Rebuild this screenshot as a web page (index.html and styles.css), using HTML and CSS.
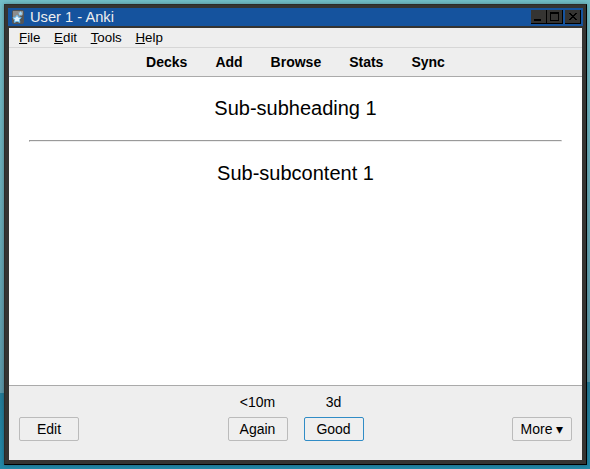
FILE: index.html
```html
<!DOCTYPE html>
<html lang="en">
<head>
<meta charset="utf-8">
<title>User 1 - Anki</title>
<link rel="stylesheet" href="styles.css">
</head>
<body>
<div class="window">
  <header class="titlebar">
    <svg class="app-icon" width="12" height="14" viewBox="0 0 12 14">
      <rect width="12" height="14" rx="2" fill="#555"/>
      <path d="M1 1h10v4L1 10z" fill="#8d8d8d"/>
      <path d="M5 5l1.400 2.200 2.800.3-1.800 2.200.5 2.700L5 11.300l-2.800 1.100.5-2.700L1 7.600l2.600-.4z" fill="#e4f5ff" stroke="#6bb9ea" stroke-width="1"/>
      <path d="M8.500 1l.7 1.500 1.500.2-1.100 1.200.2 1.600-1.300-.8-1.500.8.3-1.600-1.100-1.200 1.600-.2z" fill="#9dd7fa"/>
    </svg>
    <h1 class="title">User 1 - Anki</h1>
    <div class="controls">
      <span class="control"><svg width="16" height="14" viewBox="0 0 16 14" shape-rendering="crispEdges"><path d="M3 9h7v2H3z"/></svg></span>
      <span class="control"><svg width="16" height="14" viewBox="0 0 16 14" shape-rendering="crispEdges"><path fill-rule="evenodd" d="M3 2h9v9H3zM4 4v6h7V4z"/></svg></span>
      <span class="control close"><svg width="16" height="14" viewBox="0 0 16 14" shape-rendering="crispEdges"><path d="M4 3h2v1h1v1h2V4h1V3h2v1h-1v1h-1v1H9v1h1v1h1v1h1v1h-2V9H9V8H7v1H6v1H4V9h1V8h1V7h1V6H6V5H5V4H4z"/></svg></span>
    </div>
  </header>
  <main class="client">
    <nav class="menubar">
      <span><u>F</u>ile</span><span><u>E</u>dit</span><span><u>T</u>ools</span><span><u>H</u>elp</span>
    </nav>
    <nav class="toolbar">
      <span>Decks</span><span>Add</span><span>Browse</span><span>Stats</span><span>Sync</span>
    </nav>
    <section class="card">
      <div>Sub-subheading 1</div>
      <hr>
      <div>Sub-subcontent 1</div>
    </section>
    <footer class="bottom">
      <button class="btn">Edit</button>
      <div class="answers">
        <div class="answer"><span>&lt;10m</span><button class="btn">Again</button></div>
        <div class="answer"><span>3d</span><button class="btn default">Good</button></div>
      </div>
      <button class="btn">More ▾</button>
    </footer>
  </main>
</div>
</body>
</html>
```
FILE: styles.css
```css
* { box-sizing: border-box; }

body {
  margin: 0;
  padding: 4px 3px 4px 4px;
  height: 469px;
  overflow: hidden;
  font-family: "Liberation Sans", Arial, sans-serif;
  color: #000;
  background:
    linear-gradient(#247b97, #2389a9) right 382px / 50% 87px no-repeat,
    linear-gradient(#247b97, #2389a9) left 393px / 50% 76px no-repeat,
    linear-gradient(#72bec8, #6aacb8 200px, #5c98a9 390px);
}

.window {
  width: 583px;
  height: 461px;
  display: flex;
  flex-direction: column;
  padding: 3px;
  background: #353432;
  border: 1px solid #2b2a28;
  border-right-color: #000;
  border-bottom-color: #000;
  box-shadow: 0 0 4px rgba(0, 0, 0, .3);
}

.titlebar {
  height: 18px;
  flex: none;
  display: flex;
  align-items: center;
  padding-left: 4px;
  background: #15539e;
}

.app-icon { display: block; }

.title {
  margin: 0 auto 0 6px;
  font-size: 14.67px;
  font-weight: 400;
  line-height: 18px;
  color: #eee;
}

.controls { display: flex; padding-right: 2px; }

.control {
  width: 16px;
  height: 14px;
  background: #353432;
  border-right: 1px solid #000;
  border-bottom: 1px solid #000;
}

.control svg { display: block; }

.close { margin-left: 2px; }

.client {
  flex: 1;
  display: flex;
  flex-direction: column;
  margin: 2px 1px 1px;
  background: #eee;
}

.menubar {
  height: 20px;
  display: flex;
  gap: 13.600px;
  padding-left: 10px;
  font-size: 13.33px;
  line-height: 20px;
  border-bottom: 1px solid #d6d6d6;
}

.menubar u { text-underline-offset: 1px; text-decoration-thickness: 1px; }

.toolbar {
  height: 29px;
  display: flex;
  justify-content: center;
  gap: 28px;
  font-size: 14px;
  font-weight: 700;
  line-height: 28px;
  border-bottom: 1px solid #aaa;
}

.card {
  height: 308px;
  padding: 20px;
  background: #fff;
  font-size: 20px;
  line-height: 23px;
  text-align: center;
}

.card hr { margin: 20px 0; }

.bottom {
  flex: 1;
  display: flex;
  justify-content: space-between;
  align-items: flex-end;
  padding: 0 10px 19px;
  border-top: 1px solid #aaa;
  font-size: 14px;
}

.answers { display: flex; gap: 16px; }

.answer {
  display: flex;
  flex-direction: column;
  align-items: center;
  gap: 7px;
  line-height: 16px;
}

.btn {
  width: 60px;
  height: 24px;
  padding: 0;
  font: 14px/16px "Liberation Sans", Arial, sans-serif;
  color: #000;
  background: #efefef;
  border: 1px solid #bbb;
  border-radius: 2px;
}

.default { border-color: #308cc6; }
```
